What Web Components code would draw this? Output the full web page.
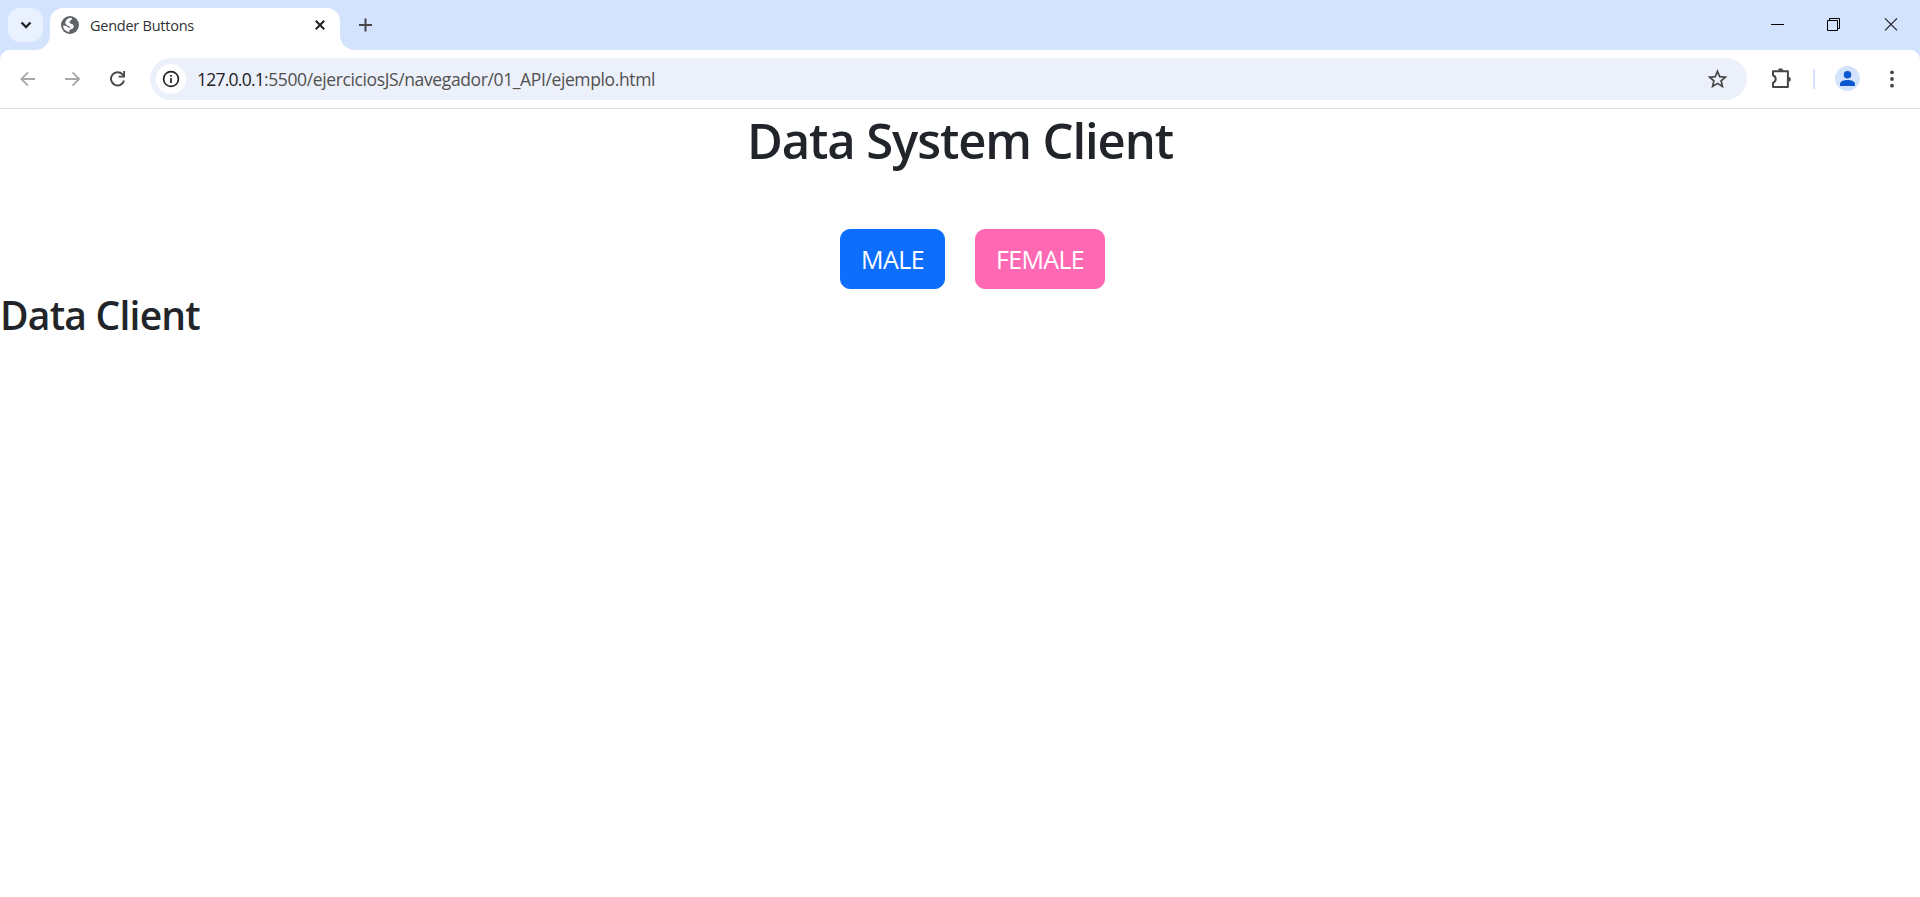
<!DOCTYPE html>
<html lang="es">
<head>
<meta charset="utf-8">
<title>Gender Buttons</title>
<style>
html,body{margin:0;height:100%;overflow:hidden;background:#fff}
body{font-family:"Open Sans","Noto Sans",sans-serif}
</style>
</head>
<body>
<browser-window>
  <tab-strip slot="tabs"><browser-tab>Gender Buttons</browser-tab></tab-strip>
  <tool-bar slot="toolbar"><address-bar host-name="127.0.0.1" path=":5500/ejerciciosJS/navegador/01_API/ejemplo.html"></address-bar></tool-bar>
  <client-page></client-page>
</browser-window>
<script>
const define = (name, html, setup) => customElements.define(name, class extends HTMLElement {
  constructor() {
    super();
    const t = document.createElement('template');
    t.innerHTML = html;
    this.attachShadow({mode: 'open'}).append(t.content.cloneNode(true));
  }
  connectedCallback() { if (setup) setup(this, this.shadowRoot); }
});

/* One line of text, tracked so that it fills the width it is given. */
define('fit-text', `<style>:host{display:block;white-space:pre}span{display:inline-block}</style><span><slot></slot></span>`, (el, root) => {
  const span = root.querySelector('span'), width = +el.getAttribute('width');
  el.style.width = width + 'px';
  span.style.letterSpacing = (width - span.getBoundingClientRect().width) / el.textContent.length + 'px';
});

define('browser-window', `<style>:host{display:flex;flex-direction:column;height:100vh}main{flex:1;min-height:0}</style>
<slot name="tabs"></slot><slot name="toolbar"></slot><main><slot></slot></main>`);

define('browser-tab', `<style>
:host{display:flex;align-items:center;box-sizing:border-box;position:relative;width:290px;height:42px;padding:0 12px 8px 10px;background:#fff;border-radius:13px 13px 0 0;color:#303134;font-size:14.5px}
:host::before,:host::after{content:"";position:absolute;bottom:0;width:15px;height:15px}
:host::before{left:-15px;background:radial-gradient(circle at 0 0,transparent 14.5px,#fff 15.5px)}
:host::after{right:-15px;background:radial-gradient(circle at 100% 0,transparent 14.5px,#fff 15.5px)}
fit-text{margin:1px auto 0 10px;line-height:20px}
svg{display:block;flex:none}
</style>
<svg width="20" height="20" viewBox="0 0 20 20"><circle cx="10" cy="10" r="9" fill="#5f6368"/><path d="M12 2.9Q12.2 4.8 10.6 5.6T9.6 7.8Q10 8.8 11.8 9T13.8 11.6Q13.6 14 11.2 14.2T9.4 17.2Q3.4 16.3 2.9 10.6L5.3 10.8Q7.6 11.2 8.3 12.6L10 12.8V11.8Q8.4 11.3 6.7 10.1T5.2 7.2Q6 4.4 9 3Z" fill="#fff"/></svg>
<fit-text width="104">Gender Buttons</fit-text>
<svg width="16" height="16" viewBox="0 0 16 16"><path d="M3.8 3.8 12.2 12.2M12.2 3.8 3.8 12.2" stroke="#202124" stroke-width="2"/></svg>`,
);

define('tab-strip', `<style>
:host{display:flex;flex:none;height:50px;background:#d3e2fd;align-items:flex-start}
.search{display:flex;align-items:center;justify-content:center;width:35px;height:34px;margin:8px 7px 0 8px;border-radius:12px;background:#e9f0fe;flex:none}
slot{display:block;margin-top:8px}
.add{margin:17px auto 0 17px}
svg{display:block}
.controls{display:flex;margin-top:12px}
.controls svg{width:58px;height:25px}
</style>
<div class="search"><svg width="14" height="10" viewBox="0 0 14 10"><path d="M2.5 2.5 7 7 11.5 2.5" fill="none" stroke="#202124" stroke-width="2.3"/></svg></div>
<slot></slot>
<svg class="add" width="16" height="16" viewBox="0 0 16 16"><path d="M8.5 1.5V14.5M2 8H15" stroke="#474747" stroke-width="2"/></svg>
<div class="controls">
<svg viewBox="0 0 58 25"><path d="M25 12.5H38" stroke="#000"/></svg>
<svg viewBox="0 0 58 25"><path d="M23.5 8.5H33.5V18.5H23.5ZM25.5 8.5V6.5H35.5V16.5H33.5" fill="none" stroke="#000"/></svg>
<svg viewBox="0 0 58 25"><path d="M23 6.3 35 18.3M35 6.3 23 18.3" stroke="#202124" stroke-width="1.2"/></svg>
</div>`);

define('address-bar', `<style>
:host{display:flex;align-items:center;box-sizing:border-box;height:42px;padding:0 19px 0 6px;border-radius:21px;background:#ecf0fa;font-size:17.5px}
.info{display:flex;width:30px;height:30px;border-radius:50%;background:#fff;margin-right:11px}
svg{display:block}.info svg{margin:auto}
.host{color:#202124}.path{color:#505050;margin-right:auto}
</style>
<div class="info"><svg width="18" height="18" viewBox="0 0 18 18"><circle cx="9" cy="9" r="7.4" fill="none" stroke="#202124" stroke-width="1.7"/><path d="M9 8V13M9 5V6.7" stroke="#202124" stroke-width="1.7"/></svg></div>
<span class="host"></span><span class="path"></span>
<svg width="21" height="21" viewBox="0 0 21 21"><path d="M10.5 2.3 12.7 7.6 18.4 8.1 14.1 11.8 15.4 17.4 10.5 14.4 5.6 17.4 6.9 11.8 2.6 8.1 8.3 7.6Z" fill="none" stroke="#474747" stroke-width="1.7" transform="translate(0 1)"/></svg>`, (el, root) => {
  for (const [part, attr, width] of [['host', 'host-name', 67], ['path', 'path', 391]]) {
    const text = document.createElement('fit-text');
    text.className = part;
    text.setAttribute('width', width);
    text.textContent = el.getAttribute(attr);
    root.querySelector('.' + part).replaceWith(text);
  }
});

define('tool-bar', `<style>
:host{display:flex;flex:none;align-items:center;box-sizing:border-box;height:59px;padding:0 0 1px;background:#fff;border-bottom:1px solid #e0e0e0;position:relative}
:host::before,:host::after{content:"";position:absolute;top:0;width:10px;height:10px}
:host::before{left:0;background:radial-gradient(circle at 100% 100%,transparent 9.5px,#d3e2fd 10.5px)}
:host::after{right:0;background:radial-gradient(circle at 0 100%,transparent 9.5px,#d3e2fd 10.5px)}
svg{display:block;flex:none}
nav{display:flex;width:150px;flex:none;box-sizing:border-box;padding-left:18px;gap:25px}
slot{display:block;flex:1}
.actions{display:flex;align-items:center;width:173px;flex:none}
.sep{width:2px;height:20px;background:#d3e2fd;margin-left:19px}
.avatar{margin-left:20px}.dots{margin-left:22px}.puzzle{margin-left:23px}
</style>
<nav>
<svg width="20" height="20" viewBox="0 0 20 20"><path d="M17 10H4M10 3.3 3.3 10 10 16.7" fill="none" stroke="#a8a8a8" stroke-width="1.8"/></svg>
<svg width="20" height="20" viewBox="0 0 20 20"><path d="M2 10H16M9.5 3.3 16.2 10 9.5 16.7" fill="none" stroke="#a8a8a8" stroke-width="1.8"/></svg>
<svg width="20" height="20" viewBox="0 0 20 20"><path d="M16 11.5A6.6 6.6 0 1 1 14.3 5.2L16 7" fill="none" stroke="#474747" stroke-width="1.9"/><path d="M17 2V8.5H10.6V6.7H15.2V2Z" fill="#474747"/></svg>
</nav>
<slot></slot>
<div class="actions">
<svg class="puzzle" width="24" height="24" viewBox="0 0 24 24"><path d="M4 4.2H17.9V20H3V15.9Q5.7 14.8 5.7 12.1T3 8.3V4.2Z" fill="none" stroke="#474747" stroke-width="2" stroke-linejoin="round"/><path d="M8 3.8a2.6 2.6 0 0 1 5.2 0ZM18.3 9.7a2.5 2.5 0 0 1 0 5Z" fill="#474747"/></svg>
<div class="sep"></div>
<svg class="avatar" width="25" height="25" viewBox="0 0 25 25"><circle cx="12.5" cy="12.5" r="12.5" fill="#d3e2fd"/><circle cx="12.5" cy="8.7" r="3.8" fill="#0b57d0"/><path d="M5 20V18C5 15.4 9 14.1 12.5 14.1S20 15.4 20 18V20Z" fill="#0b57d0"/></svg>
<svg class="dots" width="20" height="20" viewBox="0 0 20 20"><g fill="#474747"><circle cx="10" cy="3.3" r="1.9"/><circle cx="10" cy="10" r="1.9"/><circle cx="10" cy="16.7" r="1.9"/></g></svg>
</div>`);

define('gender-button', `<style>
:host{display:block}
button{display:block;box-sizing:border-box;height:60px;margin:0;padding:0 20px;border:1px solid var(--tone);border-radius:10px;background:var(--tone);color:#fff;font:400 25px/37px "Open Sans","Noto Sans",sans-serif}
</style><button><slot></slot></button>`);

define('client-page', `<style>
:host{display:block;color:#212529}
h1,h2{margin:0;font-weight:600;white-space:nowrap}
h1{display:flex;justify-content:center;font-size:49px;line-height:60px;padding-top:1px}
h2{font-size:39px;line-height:48px;margin-top:2px}
.choices{display:flex;gap:30px;padding:59px 0 0 840px}
.male{--tone:#0d6efd}.female{--tone:#ff69b4}
</style>
<h1><fit-text width="426">Data System Client</fit-text></h1>
<div class="choices">
<gender-button class="male"><fit-text width="63">MALE</fit-text></gender-button>
<gender-button class="female"><fit-text width="88">FEMALE</fit-text></gender-button>
</div>
<h2><fit-text width="200">Data Client</fit-text></h2>`);
</script>
</body>
</html>
